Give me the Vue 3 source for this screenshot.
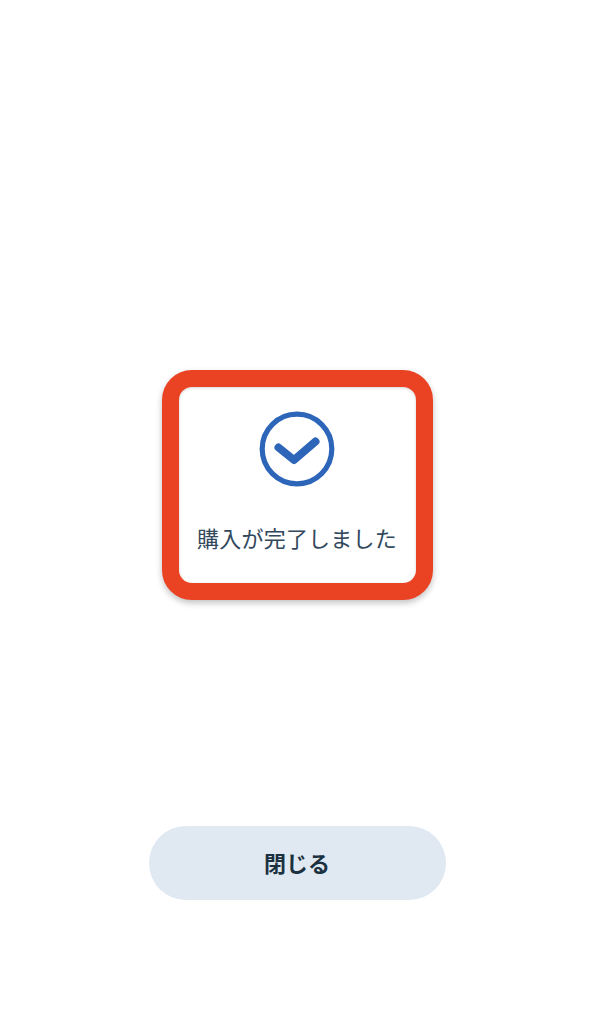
<script setup>
const message = '購入が完了しました'
const closeLabel = '閉じる'
</script>

<template>
  <main class="page">
    <section class="card">
      <svg class="check" viewBox="0 0 76 76" width="76" height="76" aria-hidden="true">
        <circle cx="38" cy="38" r="34.8" fill="none" stroke="#2d66b8" stroke-width="5.2" />
        <path d="M19.5 36.5 L35 49 L56.5 30.5" fill="none" stroke="#2d66b8" stroke-width="8" stroke-linecap="round" stroke-linejoin="round" />
      </svg>
      <p class="message">{{ message }}</p>
    </section>
    <button class="close" type="button">{{ closeLabel }}</button>
  </main>
</template>

<style scoped>
.page {
  box-sizing: border-box;
  width: 594px;
  height: 1024px;
  padding-top: 370px;
  display: flex;
  flex-direction: column;
  align-items: center;
  background: #fff;
  font-family: "Noto Sans CJK JP", "Noto Sans", sans-serif;
}
.card {
  box-sizing: border-box;
  width: 271px;
  height: 230px;
  margin-bottom: 226px;
  padding-top: 24px;
  display: flex;
  flex-direction: column;
  align-items: center;
  background: #fff;
  border: 17px solid #ea4324;
  border-radius: 30px;
  box-shadow: 0 3px 6px rgba(40, 30, 30, 0.28), inset 0 1px 3px rgba(40, 30, 30, 0.18);
}
.check {
  display: block;
  flex: none;
}
.message {
  margin: 34px 0 0;
  font-size: 22px;
  line-height: 32px;
  letter-spacing: 0.2px;
  white-space: nowrap;
  color: #32485c;
}
.close {
  width: 297px;
  height: 74px;
  padding: 0 0 3px;
  border: 0;
  border-radius: 37px;
  background: #e0e8f1;
  color: #1b313f;
  font-family: inherit;
  font-size: 22px;
  font-weight: 700;
}
</style>
